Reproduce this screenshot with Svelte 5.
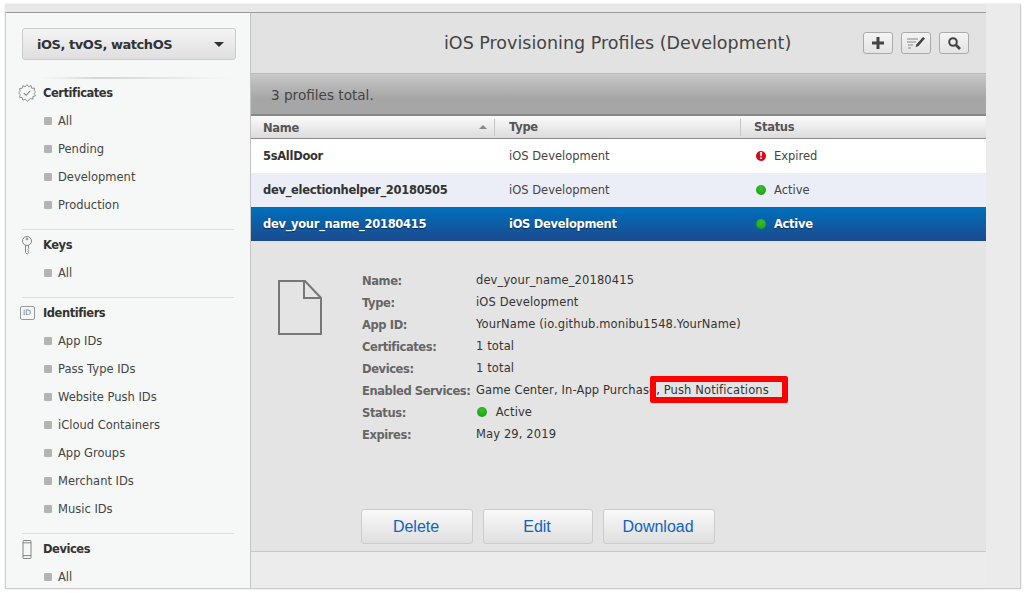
<script>
	const nav = [
		{ title: "Certificates", icon: "cert", items: ["All", "Pending", "Development", "Production"] },
		{ title: "Keys", icon: "key", items: ["All"] },
		{ title: "Identifiers", icon: "id", items: ["App IDs", "Pass Type IDs", "Website Push IDs", "iCloud Containers", "App Groups", "Merchant IDs", "Music IDs"] },
		{ title: "Devices", icon: "device", items: ["All"] }
	];

	const profiles = [
		{ name: "5sAllDoor", type: "iOS Development", status: "Expired" },
		{ name: "dev_electionhelper_20180505", type: "iOS Development", status: "Active" },
		{ name: "dev_your_name_20180415", type: "iOS Development", status: "Active" }
	];

	const details = [
		["Name:", "dev_your_name_20180415"],
		["Type:", "iOS Development"],
		["App ID:", "YourName (io.github.monibu1548.YourName)"],
		["Certificates:", "1 total"],
		["Devices:", "1 total"],
		["Enabled Services:", "Game Center, In-App Purchase, Push Notifications"],
		["Status:", "Active"],
		["Expires:", "May 29, 2019"]
	];
</script>

<div class="page">
	<div class="frame">
		<aside class="sidebar">
			<button class="platform" type="button">
				<span>iOS, tvOS, watchOS</span>
				<i class="caret"></i>
			</button>
			<div class="fade-rule"></div>

			{#each nav as group, g}
				<section class="group" class:first={g === 0}>
					<h3>
						<span class="group-icon">
							{#if group.icon === "cert"}
								<svg width="18" height="18" viewBox="0 0 18 18" fill="none" stroke="#777" stroke-width="0.8">
									<path d="M9 .6l1.700 2.300 2.300-1.400.8 2.800 2.700-.3-.3 2.700 1.300 1.100-1.300 1.900 1.300 2.100-2.600.7.100 2.600-2.700-.4L9.200 17.300l-2-2.100-2.400 1 -.6-2.600-2.700-.3.700-2.600L.700 9l1.500-1.800-.7-2.600 2.700-.3.600-2.700 2.400 1.200z" />
									<path d="M5.800 9l2.300 2.400 4.200-4.600" stroke="#555" stroke-width="1" />
								</svg>
							{:else if group.icon === "key"}
								<svg width="12" height="19" viewBox="0 0 12 19" fill="none" stroke="#777" stroke-width="0.9">
									<circle cx="6" cy="5" r="4.500" />
									<circle cx="6" cy="3" r="0.900" />
									<path d="M4.500 9.300v7.200l1.700 1.600 1.500-1.400-1-1 1-1-1-1 1-1-.4-3.400" />
								</svg>
							{:else if group.icon === "id"}
								<span class="id-badge">ID</span>
							{:else}
								<svg width="10" height="19" viewBox="0 0 10 19" fill="none" stroke="#777" stroke-width="0.9">
									<rect x="1" y="0.500" width="8" height="18" rx="1" />
									<path d="M1 2.800h8M1 15.600h8" />
								</svg>
							{/if}
						</span>
						{group.title}
					</h3>
					<ul>
						{#each group.items as item}
							<li><i class="bullet"></i>{item}</li>
						{/each}
					</ul>
				</section>
			{/each}
		</aside>

		<main class="content">
			<header class="title-bar">
				<h1>iOS Provisioning Profiles (Development)</h1>
				<div class="tools">
					<button class="tool" type="button" aria-label="Add">
						<svg width="14" height="14" viewBox="0 0 14 14"><path d="M5.500 1h3v4.500H13v3H8.500V13h-3V8.500H1v-3h4.500z" fill="#444" /></svg>
					</button>
					<button class="tool" type="button" aria-label="Edit">
						<svg width="20" height="14" viewBox="0 0 20 14">
							<path d="M1 3h11M1 6h9M2 9h5M2 12h3" stroke="#888" stroke-width="1" fill="none" />
							<path d="M17 1l2 1.500-6.500 7.500-3 1.300 1-3z" fill="#444" />
						</svg>
					</button>
					<button class="tool" type="button" aria-label="Search">
						<svg width="14" height="14" viewBox="0 0 14 14" fill="none" stroke="#444">
							<circle cx="6" cy="6" r="3.800" stroke-width="2" />
							<path d="M9 9l4 4" stroke-width="2.600" />
						</svg>
					</button>
				</div>
			</header>

			<div class="summary">3 profiles total.</div>

			<div class="thead">
				<div class="col-name"><span>Name</span><i class="sort"></i></div>
				<div class="col-type">Type</div>
				<div class="col-status">Status</div>
			</div>

			{#each profiles as row, i}
				<div class="row" class:alt={i === 1} class:selected={i === 2}>
					<div class="col-name name">{row.name}</div>
					<div class="col-type">{row.type}</div>
					<div class="col-status">
						{#if row.status === "Expired"}
							<i class="dot red">!</i>
						{:else}
							<i class="dot"></i>
						{/if}
						{row.status}
					</div>
				</div>
			{/each}

			<section class="detail">
				<div class="detail-top">
					<svg class="doc" width="46" height="57" viewBox="0 0 46 57" fill="none" stroke="#777" stroke-width="2">
						<path d="M2 2h26l16 17v36H2z" />
						<path d="M27 2v17h17" />
					</svg>
					<dl>
						{#each details as [label, value]}
							<div class="pair">
								<dt>{label}</dt>
								<dd>
									{#if label === "Status:"}
										<i class="dot"></i>
									{/if}
									{value}
									{#if label === "Enabled Services:"}
										<span class="highlight"></span>
									{/if}
								</dd>
							</div>
						{/each}
					</dl>
				</div>
				<div class="actions">
					<button type="button" class="delete">Delete</button>
					<button type="button" class="edit">Edit</button>
					<button type="button" class="download">Download</button>
				</div>
			</section>
			<div class="foot"></div>
		</main>

		<div class="gutter"></div>
	</div>
</div>

<style>
	:global(body) {
		margin: 0;
		background: #fff;
	}

	.page {
		height: 593px;
		padding: 4px 5px;
		box-sizing: border-box;
		overflow: hidden;
		font-family: "DejaVu Sans", sans-serif;
		font-size: 11.500px;
		color: #333;
	}

	.frame {
		display: flex;
		height: 585px;
		padding-top: 8px;
		box-sizing: border-box;
		background: #e8e8e8;
		border-bottom: 1px solid #ccc;
		border-radius: 2px 2px 0 0;
		box-shadow: 0 0 2px rgba(0, 0, 0, 0.2);
	}

	.sidebar {
		width: 246px;
		flex: none;
		box-sizing: border-box;
		border-top: 1px solid #999;
		border-left: 1px solid #ccc;
		border-right: 1px solid #c4c4c4;
		padding: 15px 14px 0 16px;
		background: #f6f8f8;
		overflow: hidden;
	}

	.platform {
		display: flex;
		align-items: center;
		justify-content: space-between;
		width: 214px;
		height: 32px;
		padding: 0 11px 0 14px;
		border: 1px solid #ccc;
		border-radius: 3px;
		background: linear-gradient(#f4f4f4, #dfdfdf);
		font: bold 13px "DejaVu Sans", sans-serif;
		letter-spacing: -0.450px;
		color: #333;
	}

	.caret {
		width: 0;
		height: 0;
		border: 5px solid transparent;
		border-top: 5px solid #333;
		border-bottom: 0;
	}

	.fade-rule {
		height: 2px;
		margin: 17px 0 0 20px;
		width: 190px;
		background: linear-gradient(90deg, #f6f8f8, #d4d4d4 30%, #f6f8f8);
	}

	.group {
		width: 212px;
		border-top: 1px solid #ddd;
		padding-bottom: 10px;
		box-sizing: border-box;
	}

	.group.first {
		border-top: 0;
	}

	.group:not(.first) h3 {
		margin-top: 1px;
	}

	h3 {
		display: flex;
		align-items: center;
		height: 28px;
		margin: 0 0 0 -4px;
		font-size: 11.500px;
		letter-spacing: -0.450px;
		font-weight: bold;
		color: #333;
	}

	.group-icon {
		display: flex;
		justify-content: center;
		align-items: center;
		width: 18px;
		margin-right: 7px;
	}

	.id-badge {
		display: block;
		width: 13px;
		height: 12px;
		border: 1px solid #999;
		border-radius: 2px;
		font-size: 7.500px;
		font-weight: normal;
		line-height: 12px;
		letter-spacing: 0;
		text-align: center;
		color: #777;
	}

	ul {
		list-style: none;
		margin: 0;
		padding: 0 0 0 22px;
	}

	li {
		display: flex;
		align-items: center;
		height: 28px;
		color: #444;
	}

	.bullet {
		width: 8px;
		height: 8px;
		margin-right: 6px;
		border-radius: 1px;
		background: #b4b4b4;
	}

	.content {
		flex: none;
		width: 735px;
		display: flex;
		flex-direction: column;
		background: #e4e4e4;
		border-top: 1px solid #999;
		box-sizing: border-box;
	}

	.title-bar {
		position: relative;
		display: flex;
		justify-content: flex-end;
		align-items: center;
		height: 60px;
		background: #e2e2e2;
		border-bottom: 1px solid #bbb;
		padding: 0 17px 0 0;
		flex: none;
	}

	h1 {
		position: absolute;
		left: 193px;
		top: 19px;
		margin: 0;
		font-size: 17.500px;
		font-weight: normal;
		line-height: 22px;
		color: #444;
		white-space: nowrap;
	}

	.tools {
		display: flex;
		gap: 8px;
	}

	.tool {
		display: flex;
		align-items: center;
		justify-content: center;
		width: 30px;
		height: 22px;
		padding: 0;
		border: 1px solid #aaa;
		border-radius: 3px;
		background: linear-gradient(#f4f4f4, #e4e4e4);
	}

	.summary {
		flex: none;
		height: 42px;
		box-sizing: border-box;
		padding: 13px 0 0 20px;
		background: linear-gradient(#c9c9c9, #a6a6a6 60%, #a6a6a6);
		border-bottom: 2px solid #888;
		font-size: 13.600px;
		line-height: 16px;
		color: #444;
	}

	.thead {
		flex: none;
		display: flex;
		height: 23px;
		box-sizing: border-box;
		align-items: center;
		background: linear-gradient(#fbfbfb, #dcdcdc);
		border-bottom: 1px solid #8a8a8a;
		font-weight: bold;
		color: #555;
		font-size: 11.500px;
		letter-spacing: -0.300px;
		padding-top: 1px;
	}

	.col-name {
		position: relative;
		width: 243px;
		flex: none;
		box-sizing: border-box;
		padding-left: 12px;
	}

	.col-type {
		width: 246px;
		flex: none;
		box-sizing: border-box;
		padding-left: 15px;
	}

	.col-status {
		flex: 1;
		display: flex;
		align-items: center;
		padding-left: 16px;
	}

	.thead .col-type,
	.thead .col-status {
		border-left: 1px solid #c6c6c6;
		height: 17px;
		line-height: 17px;
	}

	.thead .col-type {
		padding-left: 14px;
	}

	.thead .col-status {
		padding-left: 13px;
	}

	.sort {
		position: absolute;
		right: 7px;
		top: 4px;
		width: 0;
		height: 0;
		border: 4px solid transparent;
		border-bottom: 4px solid #888;
		border-top: 0;
	}

	.row {
		flex: none;
		display: flex;
		align-items: center;
		height: 34px;
		background: #fff;
		color: #444;
	}

	.row.alt {
		background: #ebeef6;
	}

	.row.selected {
		background: linear-gradient(#0070bc, #1b4a8e);
		color: #fff;
		font-weight: bold;
		letter-spacing: -0.300px;
		text-shadow: 0 1px 1px rgba(0, 0, 0, 0.5);
	}

	.name {
		font-weight: bold;
		letter-spacing: -0.300px;
		color: #333;
	}

	.selected .name {
		color: #fff;
	}

	.dot {
		display: inline-block;
		flex: none;
		width: 10px;
		height: 10px;
		border-radius: 50%;
		background: radial-gradient(circle at 50% 35%, #3cc02c, #119a0c);
		vertical-align: -1px;
	}

	.col-status .dot {
		margin-right: 8px;
	}

	.dot.red {
		background: #d9070f;
		color: #fff;
		font: bold 9px/10px "DejaVu Sans", sans-serif;
		text-align: center;
	}

	.detail {
		flex: 1;
		display: flex;
		flex-direction: column;
		justify-content: space-between;
		background: #e4e4e4;
		border-bottom: 1px solid #c8c8c8;
		padding: 28px 0 7px;
		box-sizing: border-box;
	}

	.detail-top {
		display: flex;
		padding-left: 26px;
	}

	.doc {
		margin: 10px 39px 0 0;
		flex: none;
	}

	dl {
		margin: 0;
	}

	.pair {
		display: flex;
		height: 22px;
		align-items: center;
	}

	dt {
		width: 114px;
		flex: none;
		font-weight: bold;
		color: #666;
		font-size: 11.500px;
		letter-spacing: -0.400px;
		white-space: nowrap;
		margin-top: 1px;
	}

	dd {
		position: relative;
		margin: 0;
		color: #333;
		letter-spacing: 0.120px;
		white-space: nowrap;
	}

	dd .dot {
		margin: 0 5px 0 1px;
	}

	.highlight {
		position: absolute;
		left: 174px;
		top: -7px;
		width: 126px;
		height: 15px;
		border: 6px solid #f00;
		border-radius: 2px;
	}

	.actions {
		display: flex;
		gap: 10px;
		padding-left: 110px;
	}

	.actions button {
		height: 35px;
		padding: 0 2px 0 0;
		border: 1px solid #ccc;
		border-radius: 3px;
		background: linear-gradient(#f9f9f9, #dfdfdf);
		font: 16px "Liberation Sans", sans-serif;
		color: #0f64bf;
	}

	.delete {
		width: 112px;
	}

	.edit {
		width: 110px;
	}

	.download {
		width: 112px;
	}

	.foot {
		flex: none;
		height: 36px;
		background: #ececec;
	}

	.gutter {
		flex: 1;
		background: #ebebeb;
		border-right: 1px solid #ccc;
		margin-top: -8px;
		border-radius: 0 2px 0 0;
	}
</style>
